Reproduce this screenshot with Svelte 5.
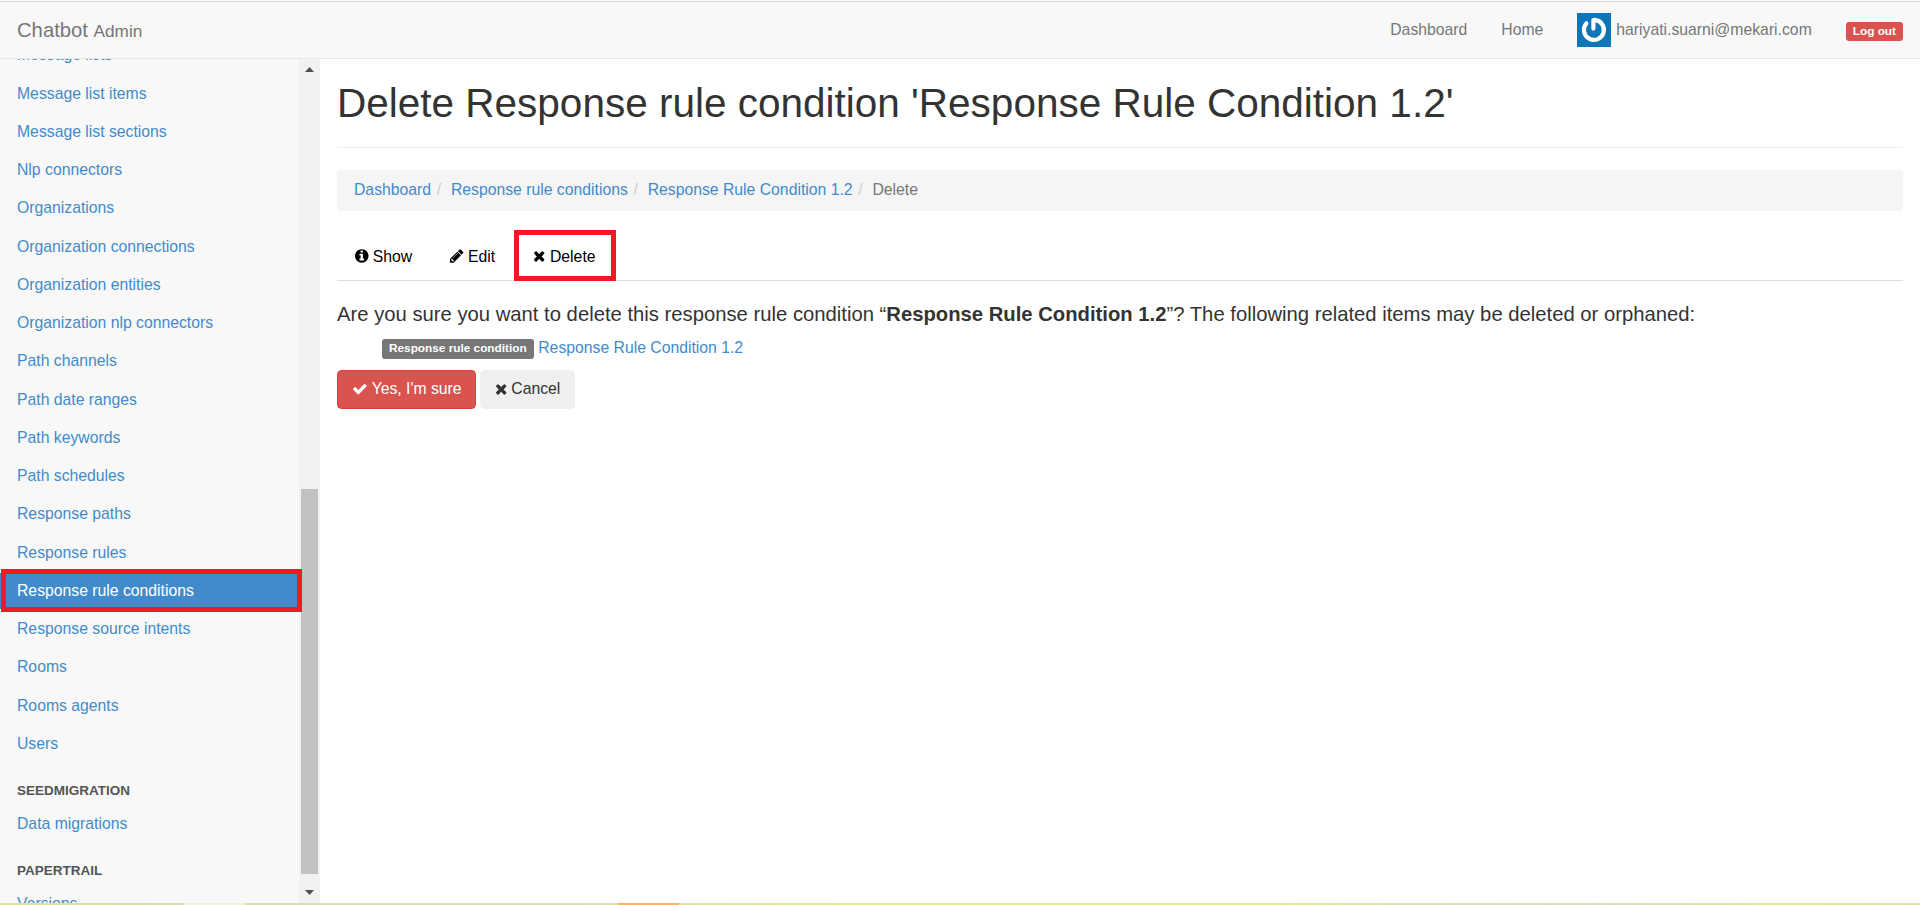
<script>
  const sections = [
    {
      title: '',
      items: [
        'Message lists', 'Message list items', 'Message list sections', 'Nlp connectors',
        'Organizations', 'Organization connections', 'Organization entities',
        'Organization nlp connectors', 'Path channels', 'Path date ranges', 'Path keywords',
        'Path schedules', 'Response paths', 'Response rules', 'Response rule conditions',
        'Response source intents', 'Rooms', 'Rooms agents', 'Users'
      ]
    },
    { title: 'SEEDMIGRATION', items: ['Data migrations'] },
    { title: 'PAPERTRAIL', items: ['Versions'] }
  ];
  const active = 'Response rule conditions';
  const crumbs = ['Dashboard', 'Response rule conditions', 'Response Rule Condition 1.2'];

  const icons = {
    info: {
      x: 128, w: 1536,
      d: 'M1152 1376v-160q0-14-9-23t-23-9h-96v-512q0-14-9-23t-23-9h-320q-14 0-23 9t-9 23v160q0 14 9 23t23 9h96v320h-96q-14 0-23 9t-9 23v160q0 14 9 23t23 9h448q14 0 23-9t9-23zm-128-896v-160q0-14-9-23t-23-9h-192q-14 0-23 9t-9 23v160q0 14 9 23t23 9h192q14 0 23-9t9-23zm640 416q0 209-103 385.500t-279.500 279.500-385.500 103-385.500-103-279.500-279.500-103-385.500 103-385.500 279.500-279.500 385.500-103 385.500 103 279.500 279.500 103 385.500z'
    },
    pencil: {
      x: 128, w: 1536,
      d: 'M491 1536l91-91-235-235-91 91v107h128v128h107zm523-928q0-22-22-22-10 0-17 7l-542 542q-7 7-7 17 0 22 22 22 10 0 17-7l542-542q7-7 7-17zm-54-192l416 416-832 832h-416v-416zm683 96q0 53-37 90l-166 166-416-416 166-165q36-38 90-38 53 0 91 38l235 234q37 39 37 91z'
    },
    times: {
      x: 192, w: 1408,
      d: 'M1490 1322q0 40-28 68l-136 136q-28 28-68 28t-68-28l-294-294-294 294q-28 28-68 28t-68-28l-136-136q-28-28-28-68t28-68l294-294-294-294q-28-28-28-68t28-68l136-136q28-28 68-28t68 28l294 294 294-294q28-28 68-28t68 28l136 136q28 28 28 68t-28 68l-294 294 294 294q28 28 28 68z'
    },
    check: {
      x: 0, w: 1792,
      d: 'M1671 566q0 40-28 68l-724 724-136 136q-28 28-68 28t-68-28l-136-136-362-362q-28-28-28-68t28-68l136-136q28-28 68-28t68 28l294 295 656-657q28-28 68-28t68 28l136 136q28 28 28 68z'
    }
  };
  const tabs = [
    { icon: 'info', label: 'Show' },
    { icon: 'pencil', label: 'Edit' },
    { icon: 'times', label: 'Delete', marked: true }
  ];
</script>

{#snippet icon(name)}
  <svg class="icon" viewBox="{icons[name].x} 0 {icons[name].w} 1792" width={(icons[name].w / 1792) * 15.75} height="15.75" aria-hidden="true">
    <path d={icons[name].d} fill="currentColor" />
  </svg>
{/snippet}

<div class="page">
  <header>
    <a class="brand" href="#top">Chatbot <small>Admin</small></a>
    <nav>
      <a class="dash" href="#dashboard">Dashboard</a>
      <a class="home" href="#home">Home</a>
      <a class="user" href="#user">
        <svg width="34" height="34" viewBox="0 0 34 34" aria-hidden="true">
          <rect width="34" height="34" fill="#0d76b8" />
          <path d="M17.300 6.900A10 10 0 1 1 9.400 10.300M16.400 7V15.600" fill="none" stroke="#fff" stroke-width="4.200" stroke-linecap="round" stroke-linejoin="round" />
        </svg>
        <span>hariyati.suarni@mekari.com</span>
      </a>
      <a class="logout" href="#logout">Log out</a>
    </nav>
  </header>

  <div class="body">
    <aside>
      <div class="menu">
        {#each sections as section}
          {#if section.title}<h2>{section.title}</h2>{/if}
          <ul>
            {#each section.items as item}
              <li class:active={item === active}><a href="#item">{item}</a></li>
            {/each}
          </ul>
        {/each}
      </div>
      <div class="scrollbar">
        <svg width="9" height="5" viewBox="0 0 9 5"><path d="M0 5L4.500 0L9 5Z" fill="#505050" /></svg>
        <div class="thumb"></div>
        <svg width="9" height="5" viewBox="0 0 9 5"><path d="M0 0L4.500 5L9 0Z" fill="#505050" /></svg>
      </div>
    </aside>

    <main>
      <h1>Delete Response rule condition 'Response Rule Condition 1.2'</h1>
      <ol class="crumbs">
        {#each crumbs as crumb}
          <li><a href="#crumb">{crumb}</a><i>/</i></li>
        {/each}
        <li class="current">Delete</li>
      </ol>
      <div class="tabs">
        {#each tabs as tab}
          <a class="tab" class:marked={tab.marked} href="#tab">{@render icon(tab.icon)}<span>{tab.label}</span></a>
        {/each}
      </div>
      <p class="lead">Are you sure you want to delete this response rule condition “<strong>Response Rule Condition 1.2</strong>”? The following related items may be deleted or orphaned:</p>
      <div class="related">
        <span class="label">Response rule condition</span>
        <a href="#related">Response Rule Condition 1.2</a>
      </div>
      <div class="actions">
        <button class="danger">{@render icon('check')}<span>Yes, I'm sure</span></button>
        <button class="cancel">{@render icon('times')}<span>Cancel</span></button>
      </div>
    </main>
  </div>
  <div class="strip"></div>
</div>

<style>
  :global(body) { margin: 0; background: #fff; overflow: hidden; }
  .page {
    display: flex;
    flex-direction: column;
    width: 1920px;
    height: 905px;
    overflow: hidden;
    font-family: "Liberation Sans", Arial, sans-serif;
    font-size: 15.75px;
    line-height: 22.5px;
    color: #333;
  }
  a { color: #428bca; text-decoration: none; white-space: nowrap; }
  ul, ol { list-style: none; margin: 0; padding: 0; }
  .icon { flex: none; display: block; margin-top: -1px; }

  header {
    box-sizing: border-box;
    flex: none;
    height: 59px;
    display: flex;
    justify-content: space-between;
    background: linear-gradient(#f8f8f8 1px, #d9dbda 1px, #d9dbda 2px, #f8f8f8 2px);
    border-bottom: 1px solid #e7e7e7;
    padding: 1px 17px 0;
  }
  header a { color: #777; }
  .brand { font-size: 20.25px; line-height: 59px; height: 57px; }
  .brand small { font-size: 17.2px; }
  nav { display: flex; align-items: center; height: 57px; }
  .dash, .home { padding-top: 2px; }
  .home { margin-left: 34px; }
  .user { display: flex; align-items: center; gap: 5px; margin-left: 34px; }
  .user svg { margin-top: 1px; }
  .user span { padding-top: 2px; }
  .logout {
    margin-left: 34px;
    margin-top: 4px;
    height: 19px;
    box-sizing: border-box;
    padding: 0 7px;
    border-radius: 3px;
    background: #d9534f;
    color: #fff;
    font-size: 11.81px;
    line-height: 18px;
    font-weight: bold;
  }

  .body { flex: 1; min-height: 0; display: flex; }
  aside { width: 320px; flex: none; display: flex; background: #f8f8f8; overflow: hidden; }
  .menu { width: 299px; flex: none; margin-top: -21.7px; }
  .menu li { height: 36px; margin-bottom: 2.25px; }
  .menu li a { display: block; height: 36px; line-height: 36px; padding-left: 17px; }
  .menu .active { position: relative; background: #428bca; }
  .menu .active a { color: #fff; }
  .menu .active::after {
    content: "";
    position: absolute;
    z-index: 2;
    box-sizing: border-box;
    left: 1px;
    top: -4px;
    width: 301px;
    height: 43px;
    border: 5px solid #ed1c24;
  }
  .menu h2 {
    margin: 0;
    height: 41.7px;
    padding: 16.2px 0 0 17px;
    box-sizing: border-box;
    font-size: 13.5px;
    line-height: 22px;
    color: #555;
  }
  .scrollbar {
    width: 21px;
    box-sizing: border-box;
    padding: 8px 0;
    background: #f1f1f1;
    display: flex;
    flex-direction: column;
    align-items: center;
  }
  .thumb { width: 17px; height: 385px; margin: 417px 0 16px; background: #c1c1c1; }

  main { flex: 1; padding: 0 17px; }
  h1 {
    margin: 0;
    box-sizing: border-box;
    height: 89px;
    padding-top: 22px;
    font-size: 40.5px;
    line-height: 44.500px;
    font-weight: 400;
    border-bottom: 1px solid #eee;
  }
  .crumbs {
    margin-top: 22px;
    height: 41px;
    box-sizing: border-box;
    padding: 0 17px;
    display: flex;
    background: #f5f5f5;
    border-radius: 4px;
    line-height: 40px;
  }
  .crumbs i { color: #ccc; font-style: normal; padding: 0 9.900px 0 5.600px; }
  .current { color: #777; }
  .tabs {
    height: 47px;
    margin-top: 22px;
    display: flex;
    gap: 2.250px;
    border-bottom: 1px solid #ddd;
  }
  .tab {
    position: relative;
    display: flex;
    align-items: center;
    gap: 4.200px;
    padding: 0 18px;
    color: #000;
  }
  .tab span { padding-top: 2px; }
  .marked::after {
    content: "";
    position: absolute;
    box-sizing: border-box;
    left: -1px;
    top: -3px;
    width: 102px;
    height: 51px;
    border: 5px solid #ed1c24;
  }
  .lead { margin: 22px 0 0; font-size: 20.25px; line-height: 22px; height: 22px; white-space: nowrap; }
  .related { display: flex; align-items: center; margin: 11px 0 0 45px; height: 23px; gap: 4.600px; }
  .related a { padding-top: 2px; }
  .label {
    height: 20px;
    margin-top: 3px;
    padding: 0 7px;
    border-radius: 3px;
    background: #777;
    color: #fff;
    font-size: 11.81px;
    line-height: 18px;
    font-weight: bold;
  }
  .actions { display: flex; gap: 4px; margin-top: 11px; }
  button {
    box-sizing: border-box;
    height: 39px;
    padding: 0 13.5px;
    display: flex;
    align-items: center;
    gap: 4.400px;
    border-radius: 4.500px;
    font: inherit;
    white-space: nowrap;
  }
  .danger { width: 139px; background: #d9534f; border: 1px solid #d43f3a; color: #fff; }
  .cancel { width: 95px; background: #efefef; border: 1px solid #efefef; color: #333; }
  .strip {
    height: 2px;
    flex: none;
    background: linear-gradient(90deg, #e0e3a0 0, #d8deb8 184px, #eff1e1 184px, #eff1e1 245px, #d8debb 245px, #dadfba 618px, #fcb072 618px, #fcb072 679px, #dbe2b0 679px, #e2ea9f 840px, #e2eaa0 1280px, #d9dfc0 1420px, #d9dcc8 1600px, #dce3b0 1730px, #e2e99f 1780px, #dee0b4 100%);
  }
</style>
